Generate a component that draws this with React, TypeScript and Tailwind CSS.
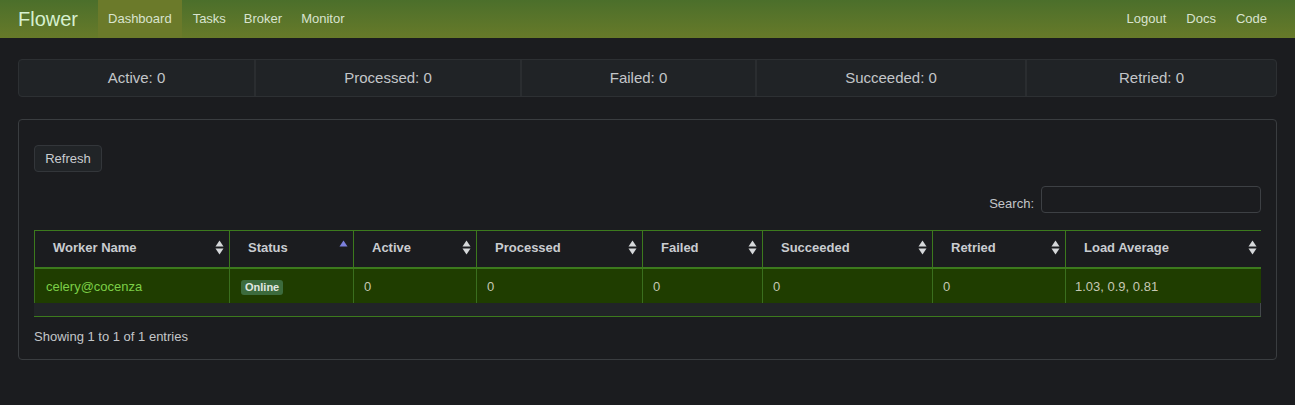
import React from 'react'

const FONT = { fontFamily: '"Liberation Sans", Arial, sans-serif' }

const stats = [
  { label: 'Active: 0', w: 'w-[235px]' },
  { label: 'Processed: 0', w: 'w-[266px]' },
  { label: 'Failed: 0', w: 'w-[235px]' },
  { label: 'Succeeded: 0', w: 'w-[270px]' },
  { label: 'Retried: 0', w: 'flex-1' },
]

const columns = [
  { name: 'Worker Name', w: 195, sort: 'both' },
  { name: 'Status', w: 124, sort: 'asc' },
  { name: 'Active', w: 123, sort: 'both' },
  { name: 'Processed', w: 166, sort: 'both' },
  { name: 'Failed', w: 120, sort: 'both' },
  { name: 'Succeeded', w: 170, sort: 'both' },
  { name: 'Retried', w: 133, sort: 'both' },
  { name: 'Load Average', w: 196, sort: 'both' },
]

function SortIcon({ kind }: { kind: string }) {
  if (kind === 'asc') {
    return (
      <svg width="9" height="16" viewBox="0 0 9 16" className="shrink-0">
        <path d="M4.5 0.5 L8.5 6.5 L0.5 6.5Z" fill="#7b7fdc" />
      </svg>
    )
  }
  return (
    <svg width="9" height="16" viewBox="0 0 9 16" className="shrink-0">
      <path d="M4.5 0.5 L8.5 6.5 L0.5 6.5Z" fill="#d6d8da" />
      <path d="M0.5 8.5 L8.5 8.5 L4.5 14.5Z" fill="#d6d8da" />
    </svg>
  )
}

export default function App() {
  return (
    <div className="min-h-[405px] bg-[#1b1c1f] text-[#c9ccd0]" style={FONT}>
      {/* navbar */}
      <div className="h-[38px] flex items-stretch justify-between bg-linear-to-b from-[#4b6f2b] to-[#677a29] pl-[18px] pr-[18px]">
        <div className="flex items-stretch">
          <div className="flex items-center text-[20px] text-[#d6f0cf] mr-[20px]">Flower</div>
          <div className="flex items-center px-[10px] bg-[#6b7a2a] text-[13px] text-[#d9e3cf]">Dashboard</div>
          <div className="flex items-center pl-[11px] pr-[9px] text-[13px] text-[#d9e3cf]">Tasks</div>
          <div className="flex items-center pl-[9px] pr-[10px] text-[13px] text-[#d9e3cf]">Broker</div>
          <div className="flex items-center pl-[9px] pr-[10px] text-[13px] text-[#d9e3cf]">Monitor</div>
        </div>
        <div className="flex items-stretch">
          <div className="flex items-center px-[10px] text-[13px] text-[#d9e3cf]">Logout</div>
          <div className="flex items-center px-[10px] text-[13px] text-[#d9e3cf]">Docs</div>
          <div className="flex items-center px-[10px] text-[13px] text-[#d9e3cf]">Code</div>
        </div>
      </div>

      <div className="px-[18px]">
        {/* stats */}
        <div className="mt-[21px] h-[38px] flex rounded-[4px] border border-[#2d3033] bg-[#202326] overflow-hidden">
          {stats.map((s, i) => (
            <div
              key={s.label}
              className={`${s.w} flex items-center justify-center text-[15px] text-[#c3c6c9] ${i > 0 ? 'border-l-2 border-[#2a2d30]' : ''}`}
            >
              {s.label}
            </div>
          ))}
        </div>

        {/* panel */}
        <div className="mt-[22px] h-[241px] rounded-[4px] border border-[#3a3d40] px-[15px] pt-[25px]">
          <button className="h-[27px] w-[68px] rounded-[4px] border border-[#33363a] bg-[#212427] text-[13px] text-[#c9ccd0]">
            Refresh
          </button>

          <div className="mt-[14px] flex items-center justify-end gap-[7px]">
            <span className="text-[13px] text-[#c3c6c9] mt-[8px]">Search:</span>
            <div className="h-[27px] w-[220px] rounded-[4px] border border-[#3d4044] bg-[#1b1c1f]" />
          </div>

          <div className="mt-[16px] w-[1227px] overflow-hidden">
            <table className="table-fixed border-collapse text-[13px]" style={{ width: 1227 }}>
              <colgroup>
                {columns.map((c) => (
                  <col key={c.name} style={{ width: c.w }} />
                ))}
              </colgroup>
              <thead>
                <tr>
                  {columns.map((c, i) => (
                    <th
                      key={c.name}
                      className={`h-[38px] p-0 border-t border-b-2 border-[#3c7a1d] ${i === 0 ? 'border-l' : ''} ${i < columns.length - 1 ? 'border-r' : ''} font-bold text-left text-[#c9ccd0]`}
                    >
                      <div className="flex items-center justify-between pl-[18px] pr-[5px] pb-[2px]">
                        <span>{c.name}</span>
                        <SortIcon kind={c.sort} />
                      </div>
                    </th>
                  ))}
                </tr>
              </thead>
              <tbody>
                <tr className="bg-[#1f3d00]">
                  <td className="h-[35px] pt-[2px] pl-[11px] border-l border-r border-[#3a6e1e] text-[#7ccf47]">celery@cocenza</td>
                  <td className="pt-[2px] pl-[11px] border-r border-[#3a6e1e]">
                    <span className="inline-block rounded-[3px] bg-[#3c6b3d] px-[4px] py-[1px] text-[11px] font-bold leading-[13px] text-[#e1e7e1]">
                      Online
                    </span>
                  </td>
                  <td className="pt-[2px] pl-[10px] border-r border-[#3a6e1e] text-[#c6c8b4]">0</td>
                  <td className="pt-[2px] pl-[10px] border-r border-[#3a6e1e] text-[#c6c8b4]">0</td>
                  <td className="pt-[2px] pl-[10px] border-r border-[#3a6e1e] text-[#c6c8b4]">0</td>
                  <td className="pt-[2px] pl-[10px] border-r border-[#3a6e1e] text-[#c6c8b4]">0</td>
                  <td className="pt-[2px] pl-[10px] border-r border-[#3a6e1e] text-[#c6c8b4]">0</td>
                  <td className="pt-[2px] pl-[9px] text-[#c6c8b4]">1.03, 0.9, 0.81</td>
                </tr>
              </tbody>
            </table>
            <div className="h-[14px] bg-[#212427] border-b border-r border-b-[#3c7a1d] border-r-[#44484c]" />
          </div>

          <div className="mt-[10px] text-[13px] text-[#c3c6c9]">Showing 1 to 1 of 1 entries</div>
        </div>
      </div>
    </div>
  )
}
